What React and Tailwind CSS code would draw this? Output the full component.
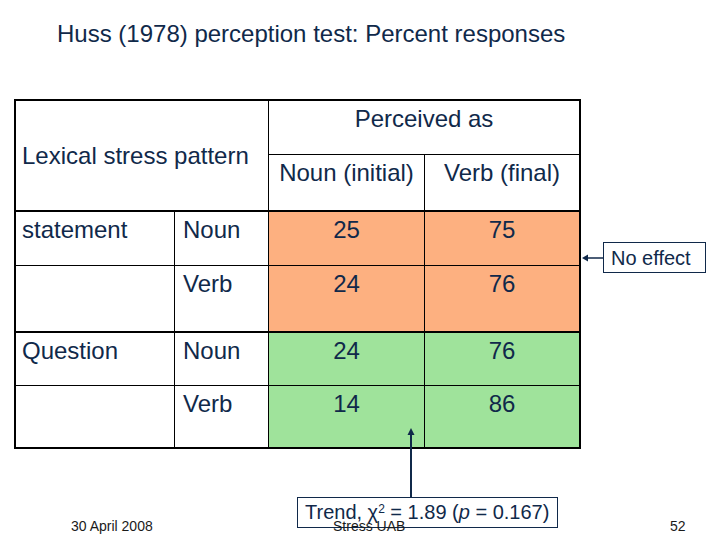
import React from "react";

const F = { fontFamily: '"Liberation Sans", Arial, sans-serif' };

function Cell({ children, className = "" }) {
  return <div className={"text-[24px] leading-[28px] pt-[4px] " + className}>{children}</div>;
}

export default function App() {
  return (
    <div className="relative w-[720px] h-[540px] bg-white text-[#10294a] overflow-hidden" style={F}>
      <div className="pt-[20px] pl-[57px] text-[24px] leading-[28px]">
        Huss (1978) perception test: Percent responses
      </div>

      <div className="ml-[14px] mt-[51px] w-[567px] bg-black p-[2px] flex flex-col gap-[2px]">
        <div className="grid grid-cols-[252px_155px_154px] grid-rows-[53px_55px] gap-px">
          <div className="row-span-2 bg-white flex items-center pl-[6px] text-[24px] leading-[28px]">
            Lexical stress pattern
          </div>
          <Cell className="col-span-2 bg-white text-center">Perceived as</Cell>
          <Cell className="bg-white text-center">Noun (initial)</Cell>
          <Cell className="bg-white text-center">Verb (final)</Cell>
        </div>
        <div className="grid grid-cols-[158px_93px_155px_154px] grid-rows-[53px_65px] gap-px">
          <Cell className="bg-white pl-[6px]">statement</Cell>
          <Cell className="bg-white pl-[8px]">Noun</Cell>
          <Cell className="bg-[#fdb080] text-center">25</Cell>
          <Cell className="bg-[#fdb080] text-center">75</Cell>
          <Cell className="bg-white"></Cell>
          <Cell className="bg-white pl-[8px]">Verb</Cell>
          <Cell className="bg-[#fdb080] text-center">24</Cell>
          <Cell className="bg-[#fdb080] text-center">76</Cell>
        </div>
        <div className="grid grid-cols-[158px_93px_155px_154px] grid-rows-[52px_61px] gap-px">
          <Cell className="bg-white pl-[6px] pt-[2px]">Question</Cell>
          <Cell className="bg-white pl-[8px] pt-[2px]">Noun</Cell>
          <Cell className="bg-[#9fe39b] text-center pt-[2px]">24</Cell>
          <Cell className="bg-[#9fe39b] text-center pt-[2px]">76</Cell>
          <Cell className="bg-white"></Cell>
          <Cell className="bg-white pl-[8px]">Verb</Cell>
          <Cell className="bg-[#9fe39b] text-center">14</Cell>
          <Cell className="bg-[#9fe39b] text-center">86</Cell>
        </div>
      </div>

      {/* No effect annotation */}
      <div className="absolute left-[603px] top-[242px] w-[103px] h-[31px] border border-[#10294a] bg-white flex items-center pl-[7px] text-[20px] leading-[24px]">
        No effect
      </div>
      <svg className="absolute left-[581px] top-[252px]" width="22" height="12" viewBox="0 0 22 12">
        <line x1="5" y1="6" x2="22" y2="6" stroke="#10294a" strokeWidth="1.5" />
        <polygon points="1,6 7,2.5 7,9.5" fill="#10294a" />
      </svg>

      {/* Trend annotation */}
      <svg className="absolute left-[405px] top-[427px]" width="12" height="71" viewBox="0 0 12 71">
        <line x1="6" y1="6" x2="6" y2="71" stroke="#10294a" strokeWidth="2" />
        <polygon points="6,1 2.5,8 9.5,8" fill="#10294a" />
      </svg>
      <div className="absolute left-[297px] top-[497px] w-[261px] h-[31px] border border-[#10294a] bg-white pl-[7px] pt-[2px] text-[20px] leading-[24px] whitespace-nowrap">
        Trend, χ<sup className="text-[12px]">2</sup> = 1.89 (<i>p</i> = 0.167)
      </div>

      <div className="absolute left-0 top-[518px] w-full flex text-[14px] leading-[16px] text-[#1a1a1a]">
        <span className="pl-[71px] w-[333px]">30 April 2008</span>
        <span className="w-[337px]">Stress UAB</span>
        <span>52</span>
      </div>
    </div>
  );
}
